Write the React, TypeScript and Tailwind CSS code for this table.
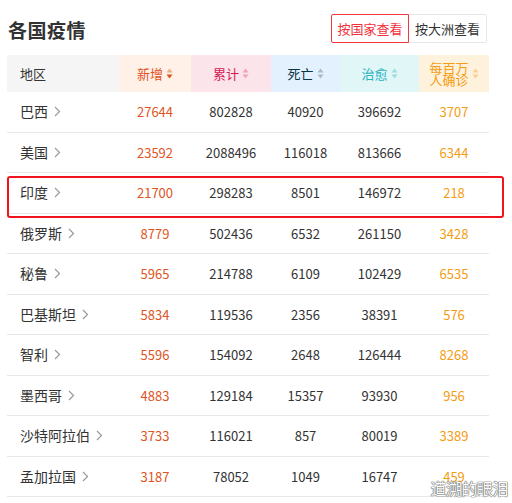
import React from "react";

const rows = [
  ["巴西", "27644", "802828", "40920", "396692", "3707"],
  ["美国", "23592", "2088496", "116018", "813666", "6344"],
  ["印度", "21700", "298283", "8501", "146972", "218"],
  ["俄罗斯", "8779", "502436", "6532", "261150", "3428"],
  ["秘鲁", "5965", "214788", "6109", "102429", "6535"],
  ["巴基斯坦", "5834", "119536", "2356", "38391", "576"],
  ["智利", "5596", "154092", "2648", "126444", "8268"],
  ["墨西哥", "4883", "129184", "15357", "93930", "956"],
  ["沙特阿拉伯", "3733", "116021", "857", "80019", "3389"],
  ["孟加拉国", "3187", "78052", "1049", "16747", "459"],
];

const SortIcon = ({ up, down }: { up: string; down: string }) => (
  <svg width="7" height="11" viewBox="0 0 7 11" className="ml-[3px]">
    <path d="M3.5 0.5 L6.5 4.5 L0.5 4.5 Z" fill={up} />
    <path d="M0.5 6.5 L6.5 6.5 L3.5 10.5 Z" fill={down} />
  </svg>
);

const Chevron = () => (
  <svg width="7" height="11" viewBox="0 0 7 11" className="ml-[6px]">
    <path d="M1 1 L5.5 5.5 L1 10" fill="none" stroke="#9a9a9a" strokeWidth="1.2" />
  </svg>
);

const App = () => {
  return (
    <div
      className="relative w-[512px] h-[503px] overflow-hidden bg-white text-[#333]"
      style={{ fontFamily: '"Noto Sans CJK SC", "Liberation Sans", sans-serif' }}
    >
      <div className="flex items-center justify-between pl-[8px] pr-[25px] pt-[14px] h-[55px]">
        <h1 className="text-[19px] font-bold text-[#333] leading-none -mt-[10px] tracking-[0.5px]">
          各国疫情
        </h1>
        <div className="flex h-[29px] self-start">
          <div className="w-[78px] flex items-center justify-center border border-[#f5383f] rounded-l-[2px] text-[13px] text-[#f0313b]">
            按国家查看
          </div>
          <div className="w-[78px] flex items-center justify-center border border-l-0 border-[#e8e8e8] rounded-r-[2px] text-[13px] text-[#333]">
            按大洲查看
          </div>
        </div>
      </div>

      <div className="ml-[7px] w-[482px]">
        <div className="flex h-[37px] text-[13px]">
          <div className="w-[112px] bg-[#f5f5f5] flex items-center pl-[13px] text-[#333]">地区</div>
          <div className="w-[72px] bg-[#fff0e8] flex items-center justify-center text-[#e0541d]">
            新增
            <SortIcon up="#eeaa8e" down="#d9531c" />
          </div>
          <div className="w-[80px] bg-[#fbe4ea] flex items-center justify-center text-[#d41a55]">
            累计
            <SortIcon up="#eea4bb" down="#eea4bb" />
          </div>
          <div className="w-[69px] bg-[#e3f0fd] flex items-center justify-center text-[#0b3645]">
            死亡
            <SortIcon up="#a5bcc4" down="#a5bcc4" />
          </div>
          <div className="w-[79px] bg-[#e1f6f6] flex items-center justify-center text-[#26b3c2]">
            治愈
            <SortIcon up="#9fdbe3" down="#9fdbe3" />
          </div>
          <div className="w-[70px] bg-[#fff2dc] flex items-center justify-center text-[#f59c12]">
            <span className="leading-[12px] text-center">
              每百万
              <br />
              人确诊
            </span>
            <SortIcon up="#f8cf92" down="#f8cf92" />
          </div>
        </div>

        {rows.map((r, i) => (
          <div
            key={i}
            className="relative flex h-[40.5px] items-center border-b border-[#e8e8e8] text-[13px]"
          >
            <div className="w-[112px] flex items-center pl-[13px] text-[14px] text-[#333]">
              {r[0]}
              <Chevron />
            </div>
            <div className="w-[72px] text-center text-[#e0541d]">{r[1]}</div>
            <div className="w-[80px] text-center">{r[2]}</div>
            <div className="w-[69px] text-center">{r[3]}</div>
            <div className="w-[79px] text-center">{r[4]}</div>
            <div className="w-[70px] text-center text-[#f59c12]">{r[5]}</div>
            {i === 2 && (
              <div className="absolute left-0 top-[3px] w-[497px] h-[42px] border-[2.5px] border-[#f2141c] rounded-[3px]" />
            )}
          </div>
        ))}
      </div>

      <div
        className="absolute right-[4px] bottom-[3px] text-[16px] text-white tracking-[-0.5px]"
        style={{ textShadow: "0 0 1px #555, 0 0 1px #555, 0 0 1px #555" }}
      >
        道溯的眼泪
      </div>
    </div>
  );
};

export default App;
